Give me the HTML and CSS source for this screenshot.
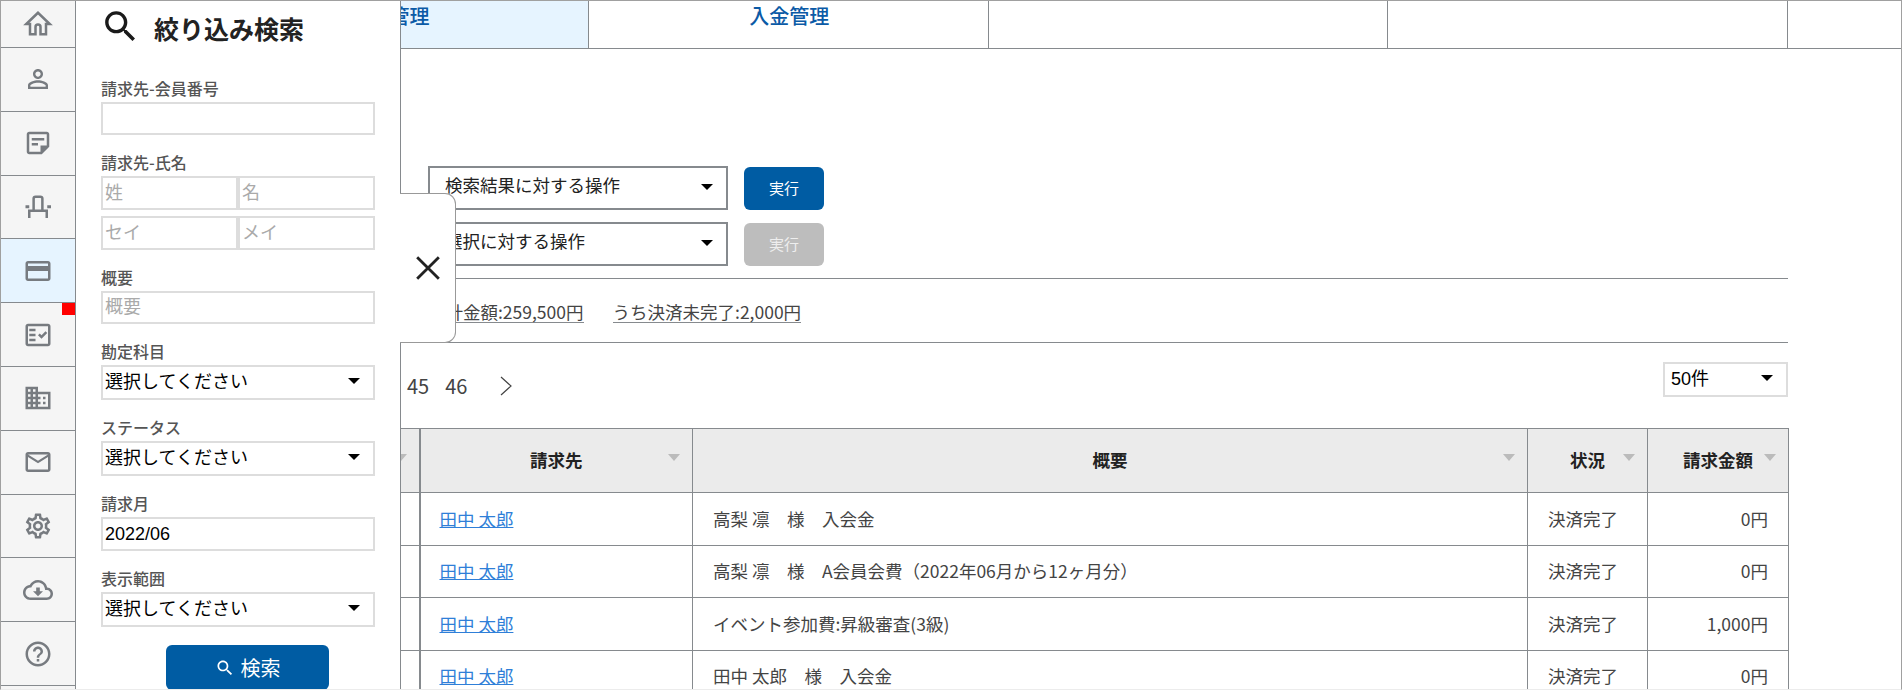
FILE: index.html
```html
<!DOCTYPE html>
<html lang="ja">
<head>
<meta charset="utf-8">
<title>請求管理</title>
<link rel="stylesheet" href="styles.css">
</head>
<body>
<div class="frame">
  <nav class="sidebar">
    <a class="nav-item nav-first"><svg class="nav-icon" viewBox="0 0 24 24"><path class="line" d="M12 3L2.6 12H5.6V20.2H10V14.4a2 2 0 0 1 4 0V20.2H18.4V12H21.4Z"/></svg></a>
    <a class="nav-item"><svg class="nav-icon" viewBox="0 0 24 24"><path d="M12 5.9c1.16 0 2.1.94 2.1 2.1s-.94 2.1-2.1 2.1S9.9 9.16 9.9 8s.94-2.1 2.1-2.1m0 9c2.97 0 6.1 1.46 6.1 2.1v1.1H5.9V17c0-.64 3.13-2.1 6.1-2.1M12 4C9.79 4 8 5.79 8 8s1.79 4 4 4 4-1.79 4-4-1.79-4-4-4zm0 9c-2.67 0-8 1.34-8 4v3h16v-3c0-2.66-5.33-4-8-4z"/></svg></a>
    <a class="nav-item"><svg class="nav-icon" viewBox="0 0 24 24"><path d="M19 5v9h-5v5H5V5h14m0-2H5C3.9 3 3 3.9 3 5v14c0 1.1.9 2 2 2h10l6-6V5c0-1.1-.9-2-2-2zm-7 11H7v-2h5v2zm5-4H7V8h10v2z"/></svg></a>
    <a class="nav-item"><svg class="nav-icon" viewBox="0 0 24 24"><path class="line" d="M8.5 14.4V5.2a1.5 1.5 0 0 1 1.5-1.5h4a1.5 1.5 0 0 1 1.5 1.5V14.4M5 20.8V15H19V20.8"/><path d="M2 10.5h3v2.5H2zM19.4 10.5h3v2.5h-3z"/></svg></a>
    <a class="nav-item nav-active"><svg class="nav-icon" viewBox="0 0 24 24"><path d="M20 4H4c-1.11 0-1.99.89-1.99 2L2 18c0 1.11.89 2 2 2h16c1.11 0 2-.89 2-2V6c0-1.11-.89-2-2-2zm0 14H4v-6h16v6zm0-10H4V6h16v2z"/></svg></a>
    <a class="nav-item nav-marked"><svg class="nav-icon" viewBox="0 0 24 24"><path d="M20 3H4c-1.1 0-2 .9-2 2v14c0 1.1.9 2 2 2h16c1.1 0 2-.9 2-2V5c0-1.1-.9-2-2-2zm0 16H4V5h16v14z"/><path d="M19.41 10.42l-1.42-1.42-3.17 3.17-1.41-1.42L12 12.16 14.82 15zM5 7h5v2H5zM5 11h5v2H5zM5 15h5v2H5z"/></svg></a>
    <a class="nav-item"><svg class="nav-icon" viewBox="0 0 24 24"><path d="M12 7V3H2v18h20V7H12zM6 19H4v-2h2v2zm0-4H4v-2h2v2zm0-4H4V9h2v2zm0-4H4V5h2v2zm4 12H8v-2h2v2zm0-4H8v-2h2v2zm0-4H8V9h2v2zm0-4H8V5h2v2zm10 12h-8v-2h2v-2h-2v-2h2v-2h-2V9h8v10zm-2-8h-2v2h2v-2zm0 4h-2v2h2v-2z"/></svg></a>
    <a class="nav-item"><svg class="nav-icon" viewBox="0 0 24 24"><path d="M20 4H4c-1.1 0-1.99.9-1.99 2L2 18c0 1.1.9 2 2 2h16c1.1 0 2-.9 2-2V6c0-1.1-.9-2-2-2zm0 14H4V8l8 5 8-5v10zm-8-7L4 6h16l-8 5z"/></svg></a>
    <a class="nav-item"><svg class="nav-icon" viewBox="0 0 24 24"><path d="M19.43 12.98c.04-.32.07-.64.07-.98 0-.34-.03-.66-.07-.98l2.11-1.65c.19-.15.24-.42.12-.64l-2-3.46c-.09-.16-.26-.25-.44-.25-.06 0-.12.01-.17.03l-2.49 1c-.52-.4-1.08-.73-1.69-.98l-.38-2.65C14.46 2.18 14.25 2 14 2h-4c-.25 0-.46.18-.49.42l-.38 2.65c-.61.25-1.17.59-1.69.98l-2.49-1c-.06-.02-.12-.03-.18-.03-.17 0-.34.09-.43.25l-2 3.46c-.13.22-.07.49.12.64l2.11 1.65c-.04.32-.07.65-.07.98 0 .33.03.66.07.98l-2.11 1.65c-.19.15-.24.42-.12.64l2 3.46c.09.16.26.25.44.25.06 0 .12-.01.17-.03l2.49-1c.52.4 1.08.73 1.69.98l.38 2.65c.03.24.24.42.49.42h4c.25 0 .46-.18.49-.42l.38-2.65c.61-.25 1.17-.59 1.69-.98l2.49 1c.06.02.12.03.18.03.17 0 .34-.09.43-.25l2-3.46c.12-.22.07-.49-.12-.64l-2.11-1.65zm-1.98-1.71c.04.31.05.52.05.73 0 .21-.02.43-.05.73l-.14 1.13.89.7 1.08.84-.7 1.21-1.27-.51-1.04-.42-.9.68c-.43.32-.84.56-1.25.73l-1.06.43-.16 1.13-.2 1.35h-1.4l-.19-1.35-.16-1.13-1.06-.43c-.43-.18-.83-.41-1.23-.71l-.91-.7-1.06.43-1.27.51-.7-1.21 1.08-.84.89-.7-.14-1.13c-.03-.31-.05-.54-.05-.74s.02-.43.05-.73l.14-1.13-.89-.7-1.08-.84.7-1.21 1.27.51 1.04.42.9-.68c.43-.32.84-.56 1.25-.73l1.06-.43.16-1.13.2-1.35h1.39l.19 1.35.16 1.13 1.06.43c.43.18.83.41 1.23.71l.91.7 1.06-.43 1.27-.51.7 1.21-1.07.85-.89.7.14 1.13zM12 8c-2.21 0-4 1.79-4 4s1.79 4 4 4 4-1.79 4-4-1.79-4-4-4zm0 6c-1.1 0-2-.9-2-2s.9-2 2-2 2 .9 2 2-.9 2-2 2z"/></svg></a>
    <a class="nav-item"><svg class="nav-icon" viewBox="0 0 24 24"><path d="M19.35 10.04C18.67 6.59 15.64 4 12 4 9.11 4 6.6 5.64 5.35 8.04 2.34 8.36 0 10.91 0 14c0 3.31 2.69 6 6 6h13c2.76 0 5-2.24 5-5 0-2.64-2.05-4.78-4.65-4.96zM19 18H6c-2.21 0-4-1.79-4-4 0-2.05 1.53-3.76 3.56-3.97l1.07-.11.5-.95C8.08 7.14 9.94 6 12 6c2.62 0 4.88 1.86 5.39 4.43l.3 1.5 1.53.11c1.56.1 2.78 1.41 2.78 2.96 0 1.65-1.35 3-3 3zm-5.55-8h-2.9v3H8l4 4 4-4h-2.55z"/></svg></a>
    <a class="nav-item"><svg class="nav-icon" viewBox="0 0 24 24"><path d="M11 18h2v-2h-2v2zm1-16C6.48 2 2 6.48 2 12s4.48 10 10 10 10-4.48 10-10S17.52 2 12 2zm0 18c-4.41 0-8-3.59-8-8s3.59-8 8-8 8 3.59 8 8-3.59 8-8 8zm0-14c-2.21 0-4 1.79-4 4h2c0-1.1.9-2 2-2s2 .9 2 2c0 2-3 1.75-3 5h2c0-2.25 3-2.5 3-5 0-2.21-1.79-4-4-4z"/></svg></a>
  </nav>

  <main class="main">
    <div class="tabs">
      <a class="tab tab-active">請求管理</a>
      <a class="tab">入金管理</a>
      <a class="tab"></a>
      <a class="tab"></a>
    </div>
    <div class="content">
      <div class="actions">
        <div class="action-row">
          <div class="select-wrap select-action"><select class="select"><option>検索結果に対する操作</option></select></div>
          <button class="btn btn-run">実行</button>
        </div>
        <div class="action-row">
          <div class="select-wrap select-action"><select class="select"><option>選択に対する操作</option></select></div>
          <button class="btn btn-run btn-disabled">実行</button>
        </div>
      </div>
      <div class="totals">
        <span class="total">合計金額:259,500円</span>
        <span class="total">うち決済未完了:2,000円</span>
      </div>
      <div class="pager-row">
        <div class="pager">
          <a class="page">45</a>
          <a class="page">46</a>
          <svg class="page-next" viewBox="0 0 12 20"><path d="M1 1l10 9-10 9"/></svg>
        </div>
        <div class="select-wrap select-count"><select class="select"><option>50件</option></select></div>
      </div>
      <table class="grid">
        <colgroup>
          <col class="col-date"><col class="col-payer"><col class="col-summary"><col class="col-status"><col class="col-amount">
        </colgroup>
        <thead>
          <tr>
            <th class="cell-split">請求月</th>
            <th>請求先</th>
            <th>概要</th>
            <th>状況</th>
            <th>請求金額</th>
          </tr>
        </thead>
        <tbody>
          <tr><td class="cell-split"></td><td class="cell-link"><a class="link">田中 太郎</a></td><td>高梨 凛　様　入会金</td><td>決済完了</td><td class="cell-amount">0円</td></tr>
          <tr><td class="cell-split"></td><td class="cell-link"><a class="link">田中 太郎</a></td><td>高梨 凛　様　A会員会費（2022年06月から12ヶ月分）</td><td>決済完了</td><td class="cell-amount">0円</td></tr>
          <tr><td class="cell-split"></td><td class="cell-link"><a class="link">田中 太郎</a></td><td>イベント参加費:昇級審査(3級)</td><td>決済完了</td><td class="cell-amount">1,000円</td></tr>
          <tr><td class="cell-split"></td><td class="cell-link"><a class="link">田中 太郎</a></td><td>田中 太郎　様　入会金</td><td>決済完了</td><td class="cell-amount">0円</td></tr>
        </tbody>
      </table>
    </div>
  </main>

  <aside class="panel">
    <div class="panel-head">
      <svg class="panel-icon" viewBox="0 0 24 24"><path d="M15.5 14h-.79l-.28-.27C15.41 12.59 16 11.11 16 9.5 16 5.91 13.09 3 9.5 3S3 5.91 3 9.5 5.91 16 9.5 16c1.61 0 3.09-.59 4.23-1.57l.27.28v.79l5 4.99L20.49 19l-4.99-5zm-6 0C7.01 14 5 11.99 5 9.5S7.01 5 9.5 5 14 7.01 14 9.5 11.99 14 9.5 14z"/></svg>
      <h2 class="panel-title">絞り込み検索</h2>
    </div>
    <form class="filters">
      <div class="field">
        <label class="label">請求先-会員番号</label>
        <input class="input" type="text">
      </div>
      <div class="field">
        <label class="label">請求先-氏名</label>
        <div class="name-grid">
          <input class="input input-tall" type="text" placeholder="姓">
          <input class="input input-tall" type="text" placeholder="名">
          <input class="input input-tall" type="text" placeholder="セイ">
          <input class="input input-tall" type="text" placeholder="メイ">
        </div>
      </div>
      <div class="field">
        <label class="label">概要</label>
        <input class="input" type="text" placeholder="概要">
      </div>
      <div class="field">
        <label class="label">勘定科目</label>
        <div class="select-wrap select-filter"><select class="select"><option>選択してください</option></select></div>
      </div>
      <div class="field">
        <label class="label">ステータス</label>
        <div class="select-wrap select-filter"><select class="select"><option>選択してください</option></select></div>
      </div>
      <div class="field">
        <label class="label">請求月</label>
        <input class="input input-tall" type="text" value="2022/06">
      </div>
      <div class="field">
        <label class="label">表示範囲</label>
        <div class="select-wrap select-filter"><select class="select"><option>選択してください</option></select></div>
      </div>
      <button class="btn btn-search" type="button">
        <svg class="btn-icon" viewBox="0 0 24 24"><path d="M15.5 14h-.79l-.28-.27C15.41 12.59 16 11.11 16 9.5 16 5.91 13.09 3 9.5 3S3 5.91 3 9.5 5.91 16 9.5 16c1.61 0 3.09-.59 4.23-1.57l.27.28v.79l5 4.99L20.49 19l-4.99-5zm-6 0C7.01 14 5 11.99 5 9.5S7.01 5 9.5 5 14 7.01 14 9.5 11.99 14 9.5 14z"/></svg>
        検索
      </button>
    </form>
  </aside>

  <button class="panel-close" type="button" aria-label="閉じる">
    <svg class="close-icon" viewBox="0 0 24 24"><path d="M2 2L22 22M22 2L2 22"/></svg>
  </button>
</div>
</body>
</html>
```

FILE: styles.css
```css
* { box-sizing: border-box; }

html, body {
  margin: 0;
  height: 100%;
  overflow: hidden;
  background: #fff;
}

body {
  font-family: "Noto Sans CJK JP", "Noto Sans", sans-serif;
  font-size: 17.5px;
  color: #333;
}

.frame {
  position: relative;
  display: flex;
  width: 1902px;
  height: 690px;
  overflow: hidden;
  border-top: 1px solid #a0a0a0;
  border-left: 1px solid #a0a0a0;
  border-right: 1px solid #a0a0a0;
  border-bottom: 1px solid #ececec;
}

/* Sidebar */
.sidebar {
  flex: 0 0 75px;
  display: flex;
  flex-direction: column;
  background: #f5f5f5;
  border-right: 1px solid #868a8e;
}

.nav-item {
  position: relative;
  flex: 0 0 63.8px;
  display: flex;
  align-items: center;
  justify-content: center;
  border-bottom: 1px solid #868a8e;
}

.nav-first { flex-basis: 47px; }
.nav-active { background: #e6f4ff; }

.nav-marked::after {
  content: "";
  position: absolute;
  top: 0;
  right: 0;
  width: 13px;
  height: 12px;
  background: #f00;
}

.nav-icon {
  width: 30px;
  height: 30px;
  fill: #777b80;
}

.nav-icon .line {
  fill: none;
  stroke: #777b80;
  stroke-width: 2;
}

/* Main */
.main {
  flex: 1;
  min-width: 0;
}

.tabs {
  display: flex;
  height: 48px;
  margin-left: 113px;
  border-bottom: 1px solid #868a8e;
}

.tab {
  flex: 0 0 399.8px;
  padding: 2px 0 0 2px;
  border-right: 1px solid #868a8e;
  font-size: 20px;
  font-weight: 500;
  line-height: 26px;
  text-align: center;
  color: #0b5aa6;
}

.tab-active { background: #e6f4ff; }

.content {
  width: 1688px;
  margin-left: 24px;
}

.actions {
  display: flex;
  flex-direction: column;
  gap: 12px;
  padding: 117px 0 12px 328px;
  border-bottom: 1px solid #868a8e;
}

.action-row {
  display: flex;
  gap: 16px;
}

.select-wrap {
  position: relative;
}

.select-wrap::after {
  content: "";
  position: absolute;
  top: 50%;
  right: 15px;
  margin-top: -5px;
  border-left: 6px solid transparent;
  border-right: 6px solid transparent;
  border-top: 6px solid #000;
  pointer-events: none;
}

.select {
  display: block;
  width: 100%;
  height: 100%;
  margin: 0;
  background: #fff;
  border: 2px solid #ddd;
  border-radius: 0;
  appearance: none;
  font-family: "Liberation Sans", "Noto Sans CJK JP", sans-serif;
  font-size: 18px;
  color: #000;
  padding: 0 0 2px 2px;
}

.select-action {
  width: 300px;
  height: 44px;
}

.select-action .select {
  border-color: #868a8e;
  padding-left: 15px;
  padding-bottom: 4px;
  font-size: 17.5px;
  color: #222;
}

.select-action::after { margin-top: -4px; }

.select-filter { height: 35px; }

.select-count {
  width: 125px;
  height: 35px;
}

.select-count .select { padding-left: 6px; }

.btn {
  border: 0;
  border-radius: 6px;
  font-family: inherit;
  color: #fff;
}

.btn-run {
  align-self: flex-end;
  width: 80px;
  height: 43px;
  padding: 0 0 2px;
  font-size: 15px;
  background: #005ca3;
}

.btn-disabled {
  background: #bdbdbd;
  color: #eee;
}

.totals {
  display: flex;
  gap: 29px;
  align-items: flex-start;
  height: 64px;
  padding: 22px 0 0 328px;
  border-bottom: 1px solid #868a8e;
}

.total {
  height: 22px;
  border-bottom: 1px solid #868a8e;
  line-height: 21px;
  color: #444;
  white-space: nowrap;
}

.pager-row {
  display: flex;
  align-items: flex-start;
  justify-content: space-between;
  height: 85px;
  padding-top: 19px;
}

.pager {
  display: flex;
  align-items: center;
  gap: 16px;
  height: 35px;
  margin-top: 6px;
  margin-left: 307px;
  font-size: 20px;
  color: #444;
}

.page-next {
  width: 12px;
  height: 20px;
  margin-left: 17px;
  fill: none;
  stroke: #444;
  stroke-width: 1.2;
}

/* Table */
.grid {
  width: 1688px;
  table-layout: fixed;
  border-collapse: collapse;
}

.col-date { width: 319px; }
.col-payer { width: 273px; }
.col-summary { width: 835px; }
.col-status { width: 120px; }
.col-amount { width: 141px; }

.grid th,
.grid td {
  border: 1px solid #868a8e;
  font-size: 17.5px;
  font-weight: 400;
}

.grid th {
  position: relative;
  height: 64px;
  padding: 0 0 2px;
  background: #ebebeb;
  font-weight: 700;
  color: #222;
}

.grid th::after {
  content: "";
  position: absolute;
  top: 25px;
  right: 12px;
  border-left: 6.5px solid transparent;
  border-right: 6.5px solid transparent;
  border-top: 7px solid #bbb;
}

.grid td {
  height: 52.5px;
  padding: 0 20px 1px;
  color: #444;
  white-space: nowrap;
}

.grid .cell-split { border-right-width: 2px; }
.grid .cell-link { padding-left: 19px; }
.grid .cell-amount { text-align: right; }

.link {
  color: #2f7fd8;
  text-decoration: underline;
}

/* Filter panel overlay */
.panel {
  position: absolute;
  top: 0;
  left: 75px;
  width: 325px;
  height: 689px;
  padding: 5px 25px 0;
  background: #fff;
  border-right: 1px solid #868a8e;
}

.panel-head {
  display: flex;
  align-items: center;
  gap: 13px;
  height: 41px;
  margin-bottom: 32px;
  margin-left: -1px;
}

.panel-icon {
  flex: none;
  width: 41px;
  height: 41px;
  fill: #1a1a1a;
}

.panel-title {
  margin: 2px 0 0;
  font-size: 25px;
  font-weight: 700;
  line-height: 32px;
  color: #222;
}

.filters {
  display: flex;
  flex-direction: column;
  gap: 18px;
}

.field {
  display: flex;
  flex-direction: column;
}

.label {
  height: 22px;
  margin-bottom: 1px;
  font-size: 16px;
  font-weight: 500;
  line-height: 18px;
  color: #555;
}

.input {
  display: block;
  width: 100%;
  height: 33px;
  margin: 0;
  padding: 0 0 0 2px;
  background: #fff;
  border: 2px solid #ddd;
  border-radius: 0;
  outline: 0;
  font-family: "Liberation Sans", "Noto Sans CJK JP", sans-serif;
  font-size: 18px;
  color: #000;
}

.input-tall { height: 34px; }

.input::placeholder {
  color: #aaa;
  opacity: 1;
}

.name-grid {
  display: grid;
  grid-template-columns: 1fr 1fr;
  row-gap: 6px;
}

.btn-search {
  display: flex;
  align-items: center;
  justify-content: center;
  gap: 6px;
  width: 163px;
  height: 45px;
  margin: 0 0 0 65px;
  font-size: 20px;
  background: #005ca3;
}

.btn-icon {
  width: 20px;
  height: 20px;
  fill: #fff;
}

/* Close tab */
.panel-close {
  position: absolute;
  top: 192px;
  left: 399px;
  display: flex;
  align-items: center;
  justify-content: center;
  width: 56px;
  height: 150px;
  padding: 0;
  background: #fff;
  border: 1px solid #999;
  border-left: 0;
  border-radius: 0 11px 11px 0;
}

.close-icon {
  width: 26px;
  height: 26px;
  fill: none;
  stroke: #222;
  stroke-width: 2.6;
}
```
